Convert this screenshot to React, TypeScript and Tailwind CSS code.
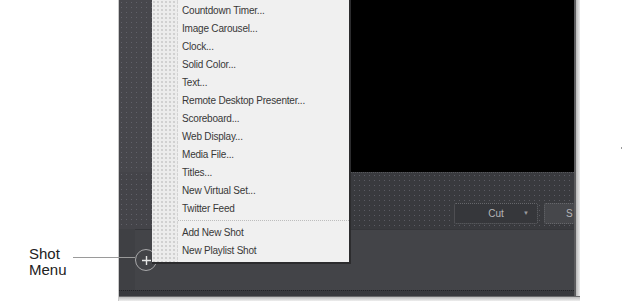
import React from "react";

const menuItems = [
  "Countdown Timer...",
  "Image Carousel...",
  "Clock...",
  "Solid Color...",
  "Text...",
  "Remote Desktop Presenter...",
  "Scoreboard...",
  "Web Display...",
  "Media File...",
  "Titles...",
  "New Virtual Set...",
  "Twitter Feed",
];

const shotItems = ["Add New Shot", "New Playlist Shot"];

const dots = "bg-[radial-gradient(rgba(120,120,130,0.55)_0.6px,transparent_0.9px)] bg-[length:5px_5px]";

const MenuRow = ({ label }: { label: string }) => (
  <div className="h-[18px] flex items-center pl-[4px] text-[10px] text-[#383838] tracking-[-0.2px] whitespace-nowrap">
    {label}
  </div>
);

export default function App() {
  return (
    <div
      className="relative w-[627px] h-[303px] bg-white flex overflow-hidden"
      style={{ fontFamily: '"Liberation Sans", Arial, sans-serif' }}
    >
      {/* annotation column */}
      <div className="w-[118px] shrink-0 pt-[246px] pl-[29px]">
        <div className="text-[15px] leading-[16px] text-[#222]">
          <div>Shot</div>
          <div>Menu</div>
        </div>
      </div>

      {/* window */}
      <div className="w-[462px] h-[301px] shrink-0 flex flex-col border-l border-[#c9c9c9] overflow-hidden">
        <div className="flex flex-1 min-w-0">
          <div className="flex flex-col flex-1 min-w-0 bg-[#3a3b3f]">
            {/* preview row */}
            <div className="flex h-[172px]">
              <div className={`w-[33px] bg-[#47474c] ${dots}`} />
              <div className="flex-1 bg-black" />
            </div>
            {/* transition controls row */}
            <div className="flex h-[57px] min-w-0">
              <div className={`w-[33px] shrink-0 bg-[#444449] ${dots}`} />
              <div className={`flex-1 min-w-0 bg-[#393a3e] ${dots} flex items-start pt-[30px] pl-[302px] gap-[6px] overflow-hidden border-t border-dotted border-[#55565a]`}>
                <div className="w-[84px] h-[21px] shrink-0 rounded-[2px] border border-dotted border-[#66676b] bg-[#36373b] flex items-center justify-center relative">
                  <span className="text-[10px] text-[#b5b5b8]">Cut</span>
                  <span className="absolute right-[8px] top-[5px] text-[6px] text-[#9a9a9e]">▼</span>
                </div>
                <div className="w-[84px] h-[21px] shrink-0 rounded-l-[2px] border border-dotted border-[#66676b] bg-[#46474b] flex items-center pl-[21px]">
                  <span className="text-[10px] text-[#b5b5b8]">S</span>
                </div>
              </div>
            </div>
            {/* shots row */}
            <div className="h-[61px] bg-[#434448] flex">
              <div className="w-[16px] bg-[#3f4044]" />
              <div className="flex-1 border-t border-[#35363a]" />
            </div>
            <div className="h-[6px] bg-[#38393d] border-t border-dotted border-[#222326]" />
          </div>
          {/* right frame edge */}
          <div className="w-[6px] shrink-0 flex">
            <div className="w-[2px] bg-[#5c5c5e]" />
            <div className="w-[4px] bg-gradient-to-r from-[#b9b9b9] to-[#ececec]" />
          </div>
        </div>
        <div className="h-[5px] flex flex-col">
          <div className="h-[1px] bg-[#6a6a6c]" />
          <div className="flex-1 bg-gradient-to-b from-[#bdbdbd] to-[#efefef]" />
        </div>
      </div>

      {/* leader line */}
      <div className="absolute left-[73px] top-[257px] w-[62px] h-[1px] bg-[#9a9a9a]" />

      {/* shot menu button */}
      <div className="absolute left-[135px] top-[249px] w-[22px] h-[22px] rounded-full border border-[#a8a8aa] flex items-center justify-center">
        <svg width="11" height="11" viewBox="0 0 11 11">
          <path d="M5.5 1v9M1 5.5h9" stroke="#e6e6e6" strokeWidth="1.4" />
        </svg>
      </div>

      {/* dropdown menu */}
      <div className="absolute left-[152px] top-0 w-[199px] h-[264px] flex bg-[#f0f0f0] border-r-2 border-b-2 border-[#2c2c2e]">
        <div className="w-[26px] bg-[#ececec] bg-[radial-gradient(rgba(150,150,150,0.5)_0.6px,transparent_0.9px)] bg-[length:4px_4px] border-r border-dotted border-[#d4d4d4]" />
        <div className="flex-1 flex flex-col pt-[1px]">
          {menuItems.map((m) => (
            <MenuRow key={m} label={m} />
          ))}
          <div className="h-[6px] flex items-center">
            <div className="w-full border-t border-dotted border-[#bdbdbd]" />
          </div>
          {shotItems.map((m) => (
            <MenuRow key={m} label={m} />
          ))}
        </div>
      </div>

      {/* stray mark */}
      <div className="absolute left-[621px] top-[147px] w-[1px] h-[2px] bg-[#9a9a9a]" />
    </div>
  );
}
